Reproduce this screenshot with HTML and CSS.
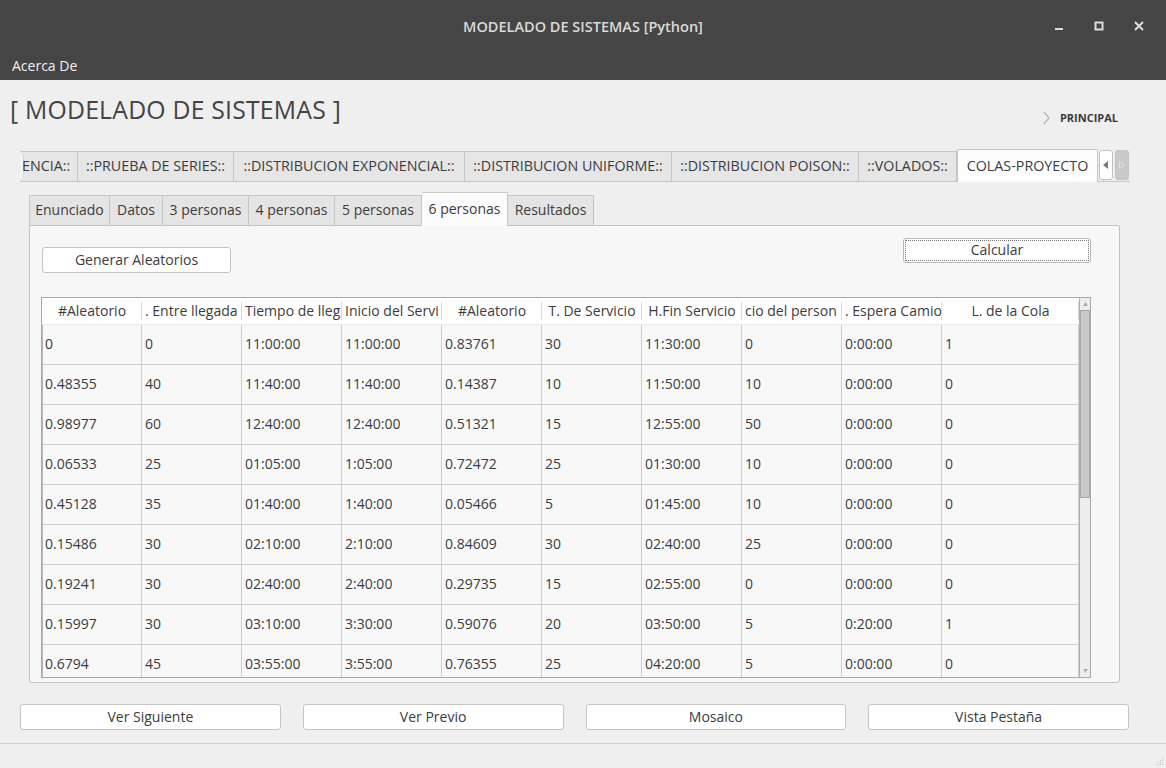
FILE: index.html
```html
<!DOCTYPE html>
<html>
<head>
<meta charset="utf-8">
<link rel="stylesheet" href="styles.css">
</head>
<body>
<div class="window">
  <div class="titlebar">
    <div></div>
    <div class="title">MODELADO DE SISTEMAS [Python]</div>
    <div class="controls">
      <svg width="12" height="12" viewBox="0 0 12 12"><rect x="2" y="8" width="8" height="2" fill="#dedede"/></svg>
      <svg width="12" height="12" viewBox="0 0 12 12"><rect x="2.5" y="2.5" width="7" height="7" fill="none" stroke="#dedede" stroke-width="2"/></svg>
      <svg width="12" height="12" viewBox="0 0 12 12"><path d="M2 2 L10 10 M10 2 L2 10" stroke="#dedede" stroke-width="2"/></svg>
    </div>
  </div>
  <div class="menubar"><span>Acerca De</span></div>

  <div class="header">
    <h1 class="heading">[ MODELADO DE SISTEMAS ]</h1>
    <div class="principal">
      <svg width="8" height="14" viewBox="0 0 8 14"><path d="M1 1 L6 7 L1 13" fill="none" stroke="#b4b4b4" stroke-width="1.2"/></svg>
      <span>PRINCIPAL</span>
    </div>
  </div>

  <div class="outer-tabs">
    <div class="otab first"><span class="clip-arc"></span>ENCIA::</div>
    <div class="otab" style="width:156px">::PRUEBA DE SERIES::</div>
    <div class="otab" style="width:231px">::DISTRIBUCION EXPONENCIAL::</div>
    <div class="otab" style="width:207px">::DISTRIBUCION UNIFORME::</div>
    <div class="otab" style="width:187px">::DISTRIBUCION POISON::</div>
    <div class="otab" style="width:98px">::VOLADOS::</div>
    <div class="otab selected" style="width:141px">COLAS-PROYECTO</div>
    <div class="arrow left"><svg width="6" height="8" viewBox="0 0 6 8"><path d="M5 0 L0 4 L5 8 Z" fill="#7a7a7a"/></svg></div>
    <div class="arrow right"><svg width="6" height="8" viewBox="0 0 6 8"><path d="M0.5 0.5 L5.5 4 L0.5 7.5 Z" fill="none" stroke="#e4e4e4" stroke-width="1"/></svg></div>
  </div>

  <div class="inner">
    <div class="inner-tabs">
      <div class="itab" style="width:81px">Enunciado</div>
      <div class="itab" style="width:53px">Datos</div>
      <div class="itab" style="width:86px">3 personas</div>
      <div class="itab" style="width:86px">4 personas</div>
      <div class="itab" style="width:87px">5 personas</div>
      <div class="itab selected" style="width:86px">6 personas</div>
      <div class="itab" style="width:86px">Resultados</div>
    </div>
    <div class="panel">
      <div class="actions">
        <button class="btn gen">Generar Aleatorios</button>
        <button class="btn calc">Calcular</button>
      </div>
      <div class="table">
        <div class="table-main">
          <div class="thead">
            <div class="th"><span>#Aleatorio</span></div>
            <div class="th left"><span>. Entre llegada</span></div>
            <div class="th left"><span>Tiempo de lleg</span></div>
            <div class="th left"><span>Inicio del Servi</span></div>
            <div class="th"><span>#Aleatorio</span></div>
            <div class="th"><span>T. De Servicio</span></div>
            <div class="th"><span>H.Fin Servicio</span></div>
            <div class="th left"><span>cio del person</span></div>
            <div class="th left"><span>. Espera Camio</span></div>
            <div class="th last"><span>L. de la Cola</span></div>
          </div>
          <div class="tbody">
            <div class="tr"><div>0</div><div>0</div><div>11:00:00</div><div>11:00:00</div><div>0.83761</div><div>30</div><div>11:30:00</div><div>0</div><div>0:00:00</div><div>1</div></div>
            <div class="tr"><div>0.48355</div><div>40</div><div>11:40:00</div><div>11:40:00</div><div>0.14387</div><div>10</div><div>11:50:00</div><div>10</div><div>0:00:00</div><div>0</div></div>
            <div class="tr"><div>0.98977</div><div>60</div><div>12:40:00</div><div>12:40:00</div><div>0.51321</div><div>15</div><div>12:55:00</div><div>50</div><div>0:00:00</div><div>0</div></div>
            <div class="tr"><div>0.06533</div><div>25</div><div>01:05:00</div><div>1:05:00</div><div>0.72472</div><div>25</div><div>01:30:00</div><div>10</div><div>0:00:00</div><div>0</div></div>
            <div class="tr"><div>0.45128</div><div>35</div><div>01:40:00</div><div>1:40:00</div><div>0.05466</div><div>5</div><div>01:45:00</div><div>10</div><div>0:00:00</div><div>0</div></div>
            <div class="tr"><div>0.15486</div><div>30</div><div>02:10:00</div><div>2:10:00</div><div>0.84609</div><div>30</div><div>02:40:00</div><div>25</div><div>0:00:00</div><div>0</div></div>
            <div class="tr"><div>0.19241</div><div>30</div><div>02:40:00</div><div>2:40:00</div><div>0.29735</div><div>15</div><div>02:55:00</div><div>0</div><div>0:00:00</div><div>0</div></div>
            <div class="tr"><div>0.15997</div><div>30</div><div>03:10:00</div><div>3:30:00</div><div>0.59076</div><div>20</div><div>03:50:00</div><div>5</div><div>0:20:00</div><div>1</div></div>
            <div class="tr"><div>0.6794</div><div>45</div><div>03:55:00</div><div>3:55:00</div><div>0.76355</div><div>25</div><div>04:20:00</div><div>5</div><div>0:00:00</div><div>0</div></div>
          </div>
        </div>
        <div class="scrollbar">
          <div class="sb-btn"><svg width="5" height="4" viewBox="0 0 5 4"><path d="M2.5 0 L5 4 L0 4 Z" fill="#b0b0b0"/></svg></div>
          <div class="sb-thumb"></div>
          <div class="sb-track"></div>
          <div class="sb-btn"><svg width="5" height="4" viewBox="0 0 5 4"><path d="M0 0 L5 0 L2.5 4 Z" fill="#b0b0b0"/></svg></div>
        </div>
      </div>
    </div>
  </div>

  <div class="bottom-buttons">
    <button class="btn">Ver Siguiente</button>
    <button class="btn">Ver Previo</button>
    <button class="btn">Mosaico</button>
    <button class="btn">Vista Pestaña</button>
  </div>
  <div class="statusbar">
    <svg class="grip" width="10" height="10" viewBox="0 0 10 10">
      <g fill="#c4c4c4">
        <rect x="8" y="2" width="1" height="1"/><rect x="6" y="4" width="1" height="1"/><rect x="8" y="4" width="1" height="1"/>
        <rect x="4" y="6" width="1" height="1"/><rect x="6" y="6" width="1" height="1"/><rect x="8" y="6" width="1" height="1"/>
        <rect x="2" y="8" width="1" height="1"/><rect x="4" y="8" width="1" height="1"/><rect x="6" y="8" width="1" height="1"/><rect x="8" y="8" width="1" height="1"/>
      </g>
    </svg>
  </div>
</div>
</body>
</html>
```

FILE: styles.css
```css
* { box-sizing: border-box; }
html, body { margin: 0; padding: 0; }
body {
  width: 1166px;
  height: 768px;
  overflow: hidden;
  background: #efefef;
  font-family: "Open Sans", "Noto Sans", "DejaVu Sans", sans-serif;
  font-size: 14px;
  color: #3c3c3c;
}
.window { display: flex; flex-direction: column; height: 768px; }

.titlebar {
  height: 52px;
  background: #454545;
  display: grid;
  grid-template-columns: 1fr auto 1fr;
  align-items: center;
}
.title {
  color: #dadada;
  font-weight: 600;
  font-size: 14.5px;
}
.controls {
  justify-self: end;
  display: flex;
  gap: 28px;
  padding-right: 21px;
}
.menubar {
  height: 28px;
  background: #454545;
  display: flex;
  align-items: center;
  padding-left: 12px;
  padding-bottom: 1px;
  color: #f0f0f0;
  font-size: 14px;
}

.header {
  height: 69px;
  display: flex;
  justify-content: space-between;
  align-items: flex-start;
  padding: 0 48px 0 10px;
}
.heading {
  margin: 14px 0 0 0;
  font-size: 24.8px;
  line-height: 30px;
  font-weight: 400;
  color: #444;
  letter-spacing: 0.2px;
}
.principal {
  margin-top: 30px;
  display: flex;
  align-items: center;
  gap: 9px;
  font-size: 11px;
  font-weight: 700;
  color: #3a3a3a;
}

.outer-tabs {
  margin-left: 20px;
  width: 1110px;
  height: 33px;
  display: flex;
  align-items: flex-end;
  border-bottom: 1px solid #c6c6c6;
}
.otab {
  height: 30px;
  background: #e6e6e6;
  border: 1px solid #c6c6c6;
  border-left: none;
  border-bottom: none;
  display: flex;
  align-items: center;
  justify-content: center;
  white-space: nowrap;
  color: #3c3c3c;
  font-size: 14.3px;
  padding-bottom: 2px;
  overflow: hidden;
}
.otab.first {
  width: 58px;
  justify-content: flex-start;
  border-left: none;
}
.clip-arc {
  display: inline-block;
  width: 4px;
  height: 26px;
  background: #f4f4f4;
  border-radius: 0 10px 10px 0;
  margin-right: -2px;
  border-right: 1px solid #d8d8d8;
}
.otab.selected {
  height: 33px;
  background: #fdfdfd;
  border-left: 1px solid #c6c6c6;
  margin-bottom: -1px;
  border-radius: 2px 2px 0 0;
  padding-bottom: 1px;
}
.arrow {
  width: 14px;
  height: 30px;
  margin-left: 1px;
  margin-bottom: 1px;
  border: 1px solid #c2c2c2;
  border-radius: 3px;
  display: flex;
  align-items: center;
  justify-content: center;
}
.arrow.left { background: #fff; }
.arrow.right { background: #c9c9c9; margin-left: 2px; }

.inner {
  margin: 10px 0 0 29px;
  width: 1091px;
}
.inner-tabs {
  display: flex;
  align-items: flex-end;
  height: 33px;
}
.itab {
  height: 30px;
  background: #e4e4e4;
  border: 1px solid #c6c6c6;
  border-bottom: none;
  border-left: none;
  display: flex;
  align-items: center;
  justify-content: center;
  white-space: nowrap;
  color: #3c3c3c;
  padding-bottom: 3px;
}
.itab:first-child { border-left: 1px solid #c6c6c6; }
.itab.selected {
  height: 34px;
  margin-bottom: -1px;
  background: #fbfbfb;
  border-radius: 2px 2px 0 0;
  position: relative;
  z-index: 1;
  padding-bottom: 2px;
}
.panel {
  height: 458px;
  background: #f7f7f7;
  border: 1px solid #c2c2c2;
  border-radius: 0 2px 3px 3px;
  padding: 12px 28px 0 11px;
  display: flex;
  flex-direction: column;
}
.actions {
  display: flex;
  justify-content: space-between;
  align-items: flex-start;
  padding-left: 1px;
  height: 59px;
}
.btn {
  font-family: inherit;
  font-size: 14px;
  color: #3c3c3c;
  background: #fff;
  border: 1px solid #c4c4c4;
  border-radius: 3px;
  height: 26px;
  padding: 0 0 2px 0;
}
.btn.gen { width: 189px; margin-top: 9px; }
.btn.calc {
  width: 188px;
  height: 25px;
  border: 1px solid #b8b8b8;
  outline: 1px dotted #777;
  outline-offset: -3px;
}

.table {
  height: 381px;
  display: flex;
  border: 1px solid #a9a9a9;
  background: #fff;
}
.table-main { flex: 0 0 1037px; display: flex; flex-direction: column; }
.thead {
  height: 27px;
  flex: 0 0 27px;
  display: flex;
  background: #fff;
  border-bottom: 1px solid #e8e8e8;
}
.th {
  flex: 0 0 100px;
  display: flex;
  justify-content: center;
  align-items: center;
  overflow: hidden;
  white-space: nowrap;
  position: relative;
  color: #3c3c3c;
  padding-bottom: 2px;
}
.th.left { justify-content: flex-start; padding-left: 3px; }
.th::after {
  content: "";
  position: absolute;
  right: 0;
  top: 4px;
  bottom: 4px;
  width: 1px;
  background: #d8d8d8;
}
.th.last { flex: 0 0 137px; }
.tbody {
  flex: 1;
  overflow: hidden;
  background: #f8f8f8;
  border-left: 1px solid #b8b8b8;
}
.tr {
  display: flex;
  height: 40px;
  border-bottom: 1px solid #cdcdcd;
}
.tr > div {
  flex: 0 0 100px;
  border-right: 1px solid #cdcdcd;
  display: flex;
  align-items: center;
  padding-left: 3px;
  padding-bottom: 2px;
  color: #3c3c3c;
}
.tr > div:first-child { flex: 0 0 99px; padding-left: 2px; }
.tr > div:last-child { flex: 0 0 137px; }

.scrollbar {
  flex: 1;
  display: flex;
  flex-direction: column;
  background: #ededed;
  border-left: 1px solid #b0b0b0;
}
.sb-btn {
  height: 12px;
  display: flex;
  align-items: center;
  justify-content: center;
}
.sb-thumb {
  height: 188px;
  background: #c9c9c9;
  border: 1px solid #a8a8a8;
}
.sb-track { flex: 1; }

.bottom-buttons {
  margin: 21px 37px 0 20px;
  display: grid;
  grid-template-columns: repeat(4, 1fr);
  gap: 22px;
}
.statusbar {
  margin-top: 13px;
  flex: 1;
  border-top: 1px solid #cfcfcf;
  display: flex;
  justify-content: flex-end;
  align-items: flex-end;
  padding: 0 2px 2px 0;
}
```
